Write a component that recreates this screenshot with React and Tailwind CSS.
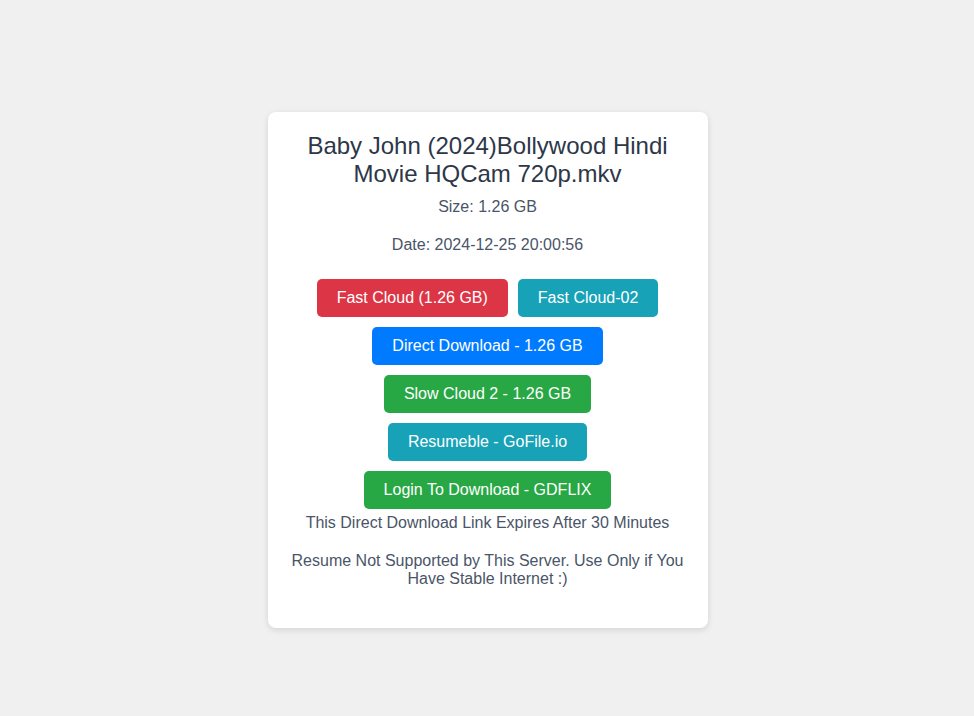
export default function App() {
  const buttons = [
    { label: "Fast Cloud (1.26 GB)", cls: "bg-[#dc3545]" },
    { label: "Fast Cloud-02", cls: "bg-[#17a2b8]" },
    { label: "Direct Download - 1.26 GB", cls: "bg-[#007bff]" },
    { label: "Slow Cloud 2 - 1.26 GB", cls: "bg-[#28a745]" },
    { label: "Resumeble - GoFile.io", cls: "bg-[#17a2b8]" },
    { label: "Login To Download - GDFLIX", cls: "bg-[#28a745]" },
  ];

  return (
    <div className="min-h-screen bg-[#f0f0f0] pl-px pt-[112px] font-['Liberation_Sans',Arial,sans-serif]">
      <div className="mx-auto w-[440px] rounded-lg bg-white p-5 text-center shadow-[0_2px_6px_rgba(0,0,0,0.12)]">
        <h2 className="mb-[10px] text-[24px] leading-[28px] text-[#2d3748]">
          Baby John (2024)Bollywood Hindi Movie HQCam 720p.mkv
        </h2>
        <p className="text-[16px] leading-[18px] text-[#4a5568]">Size: 1.26 GB</p>
        <p className="mt-5 text-[16px] leading-[18px] text-[#4a5568]">Date: 2024-12-25 20:00:56</p>
        <div className="mt-5 flex flex-wrap justify-center">
          {buttons.map((b) => (
            <a
              key={b.label}
              href="#"
              className={`m-[5px] rounded-[5px] px-5 py-[10px] text-[16px] leading-[18px] text-white ${b.cls}`}
            >
              {b.label}
            </a>
          ))}
        </div>
        <p className="text-[16px] leading-[18px] text-[#4a5568]">This Direct Download Link Expires After 30 Minutes</p>
        <p className="mt-5 mb-5 text-[16px] leading-[18px] text-[#4a5568]">
          Resume Not Supported by This Server. Use Only if You Have Stable Internet :)
        </p>
      </div>
    </div>
  );
}
